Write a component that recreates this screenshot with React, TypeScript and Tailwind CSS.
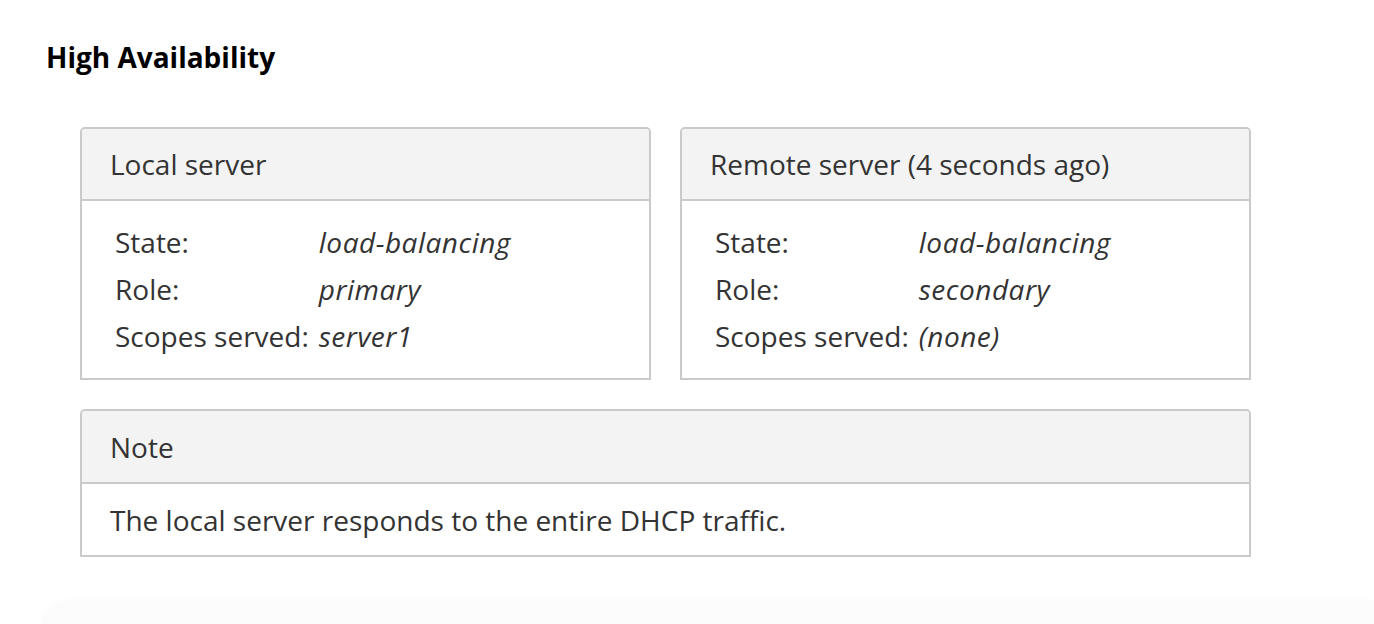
import React from 'react';

interface Row {
  label: string;
  value: string;
}

const Panel = ({
  title,
  headerH,
  children,
}: {
  title: string;
  headerH: string;
  children: React.ReactNode;
}) => (
  <div className="border-2 border-[#cacaca] rounded-t-[5px] bg-white">
    <div className={`${headerH} flex items-center px-[28px] bg-[#f3f3f3] border-b-2 border-[#cacaca] rounded-t-[3px]`}>
      {title}
    </div>
    {children}
  </div>
);

const ServerPanel = ({ title, rows }: { title: string; rows: Row[] }) => (
  <Panel title={title} headerH="h-[72px]">
    <table className="ml-[33px] mt-[17px] mb-[19px] border-collapse">
      <tbody>
        {rows.map((r) => (
          <tr key={r.label} className="h-[47px]">
            <td className="p-0 pr-[10px] whitespace-nowrap">{r.label}</td>
            <td className="p-0 italic tracking-[0.5px]">{r.value}</td>
          </tr>
        ))}
      </tbody>
    </table>
  </Panel>
);

export default function App() {
  return (
    <div
      className="relative w-[1374px] h-[624px] overflow-hidden bg-white text-[#333333] text-[28px]"
      style={{ fontFamily: '"Open Sans", "Liberation Sans", sans-serif' }}
    >
      <div className="pl-[46px] pt-[39px]">
        <h2 className="font-bold text-black leading-[36px] text-[28px]">High Availability</h2>

        <div className="ml-[34px] mt-[52px] w-[1171px] flex flex-col gap-[29px]">
          <div className="grid grid-cols-2 gap-[29px]">
            <ServerPanel
              title="Local server"
              rows={[
                { label: 'State:', value: 'load-balancing' },
                { label: 'Role:', value: 'primary' },
                { label: 'Scopes served:', value: 'server1' },
              ]}
            />
            <ServerPanel
              title="Remote server (4 seconds ago)"
              rows={[
                { label: 'State:', value: 'load-balancing' },
                { label: 'Role:', value: 'secondary' },
                { label: 'Scopes served:', value: '(none)' },
              ]}
            />
          </div>

          <Panel title="Note" headerH="h-[73px]">
            <div className="h-[71px] flex items-center px-[28px]">
              The local server responds to the entire DHCP traffic.
            </div>
          </Panel>
        </div>
      </div>

      {/* next section peeking in at the bottom */}
      <div className="absolute left-[40px] right-0 top-[600px] h-[60px] rounded-tl-[30px] bg-[#fcfcfc] shadow-[0_-2px_12px_rgba(0,0,0,0.012)]" />
    </div>
  );
}
